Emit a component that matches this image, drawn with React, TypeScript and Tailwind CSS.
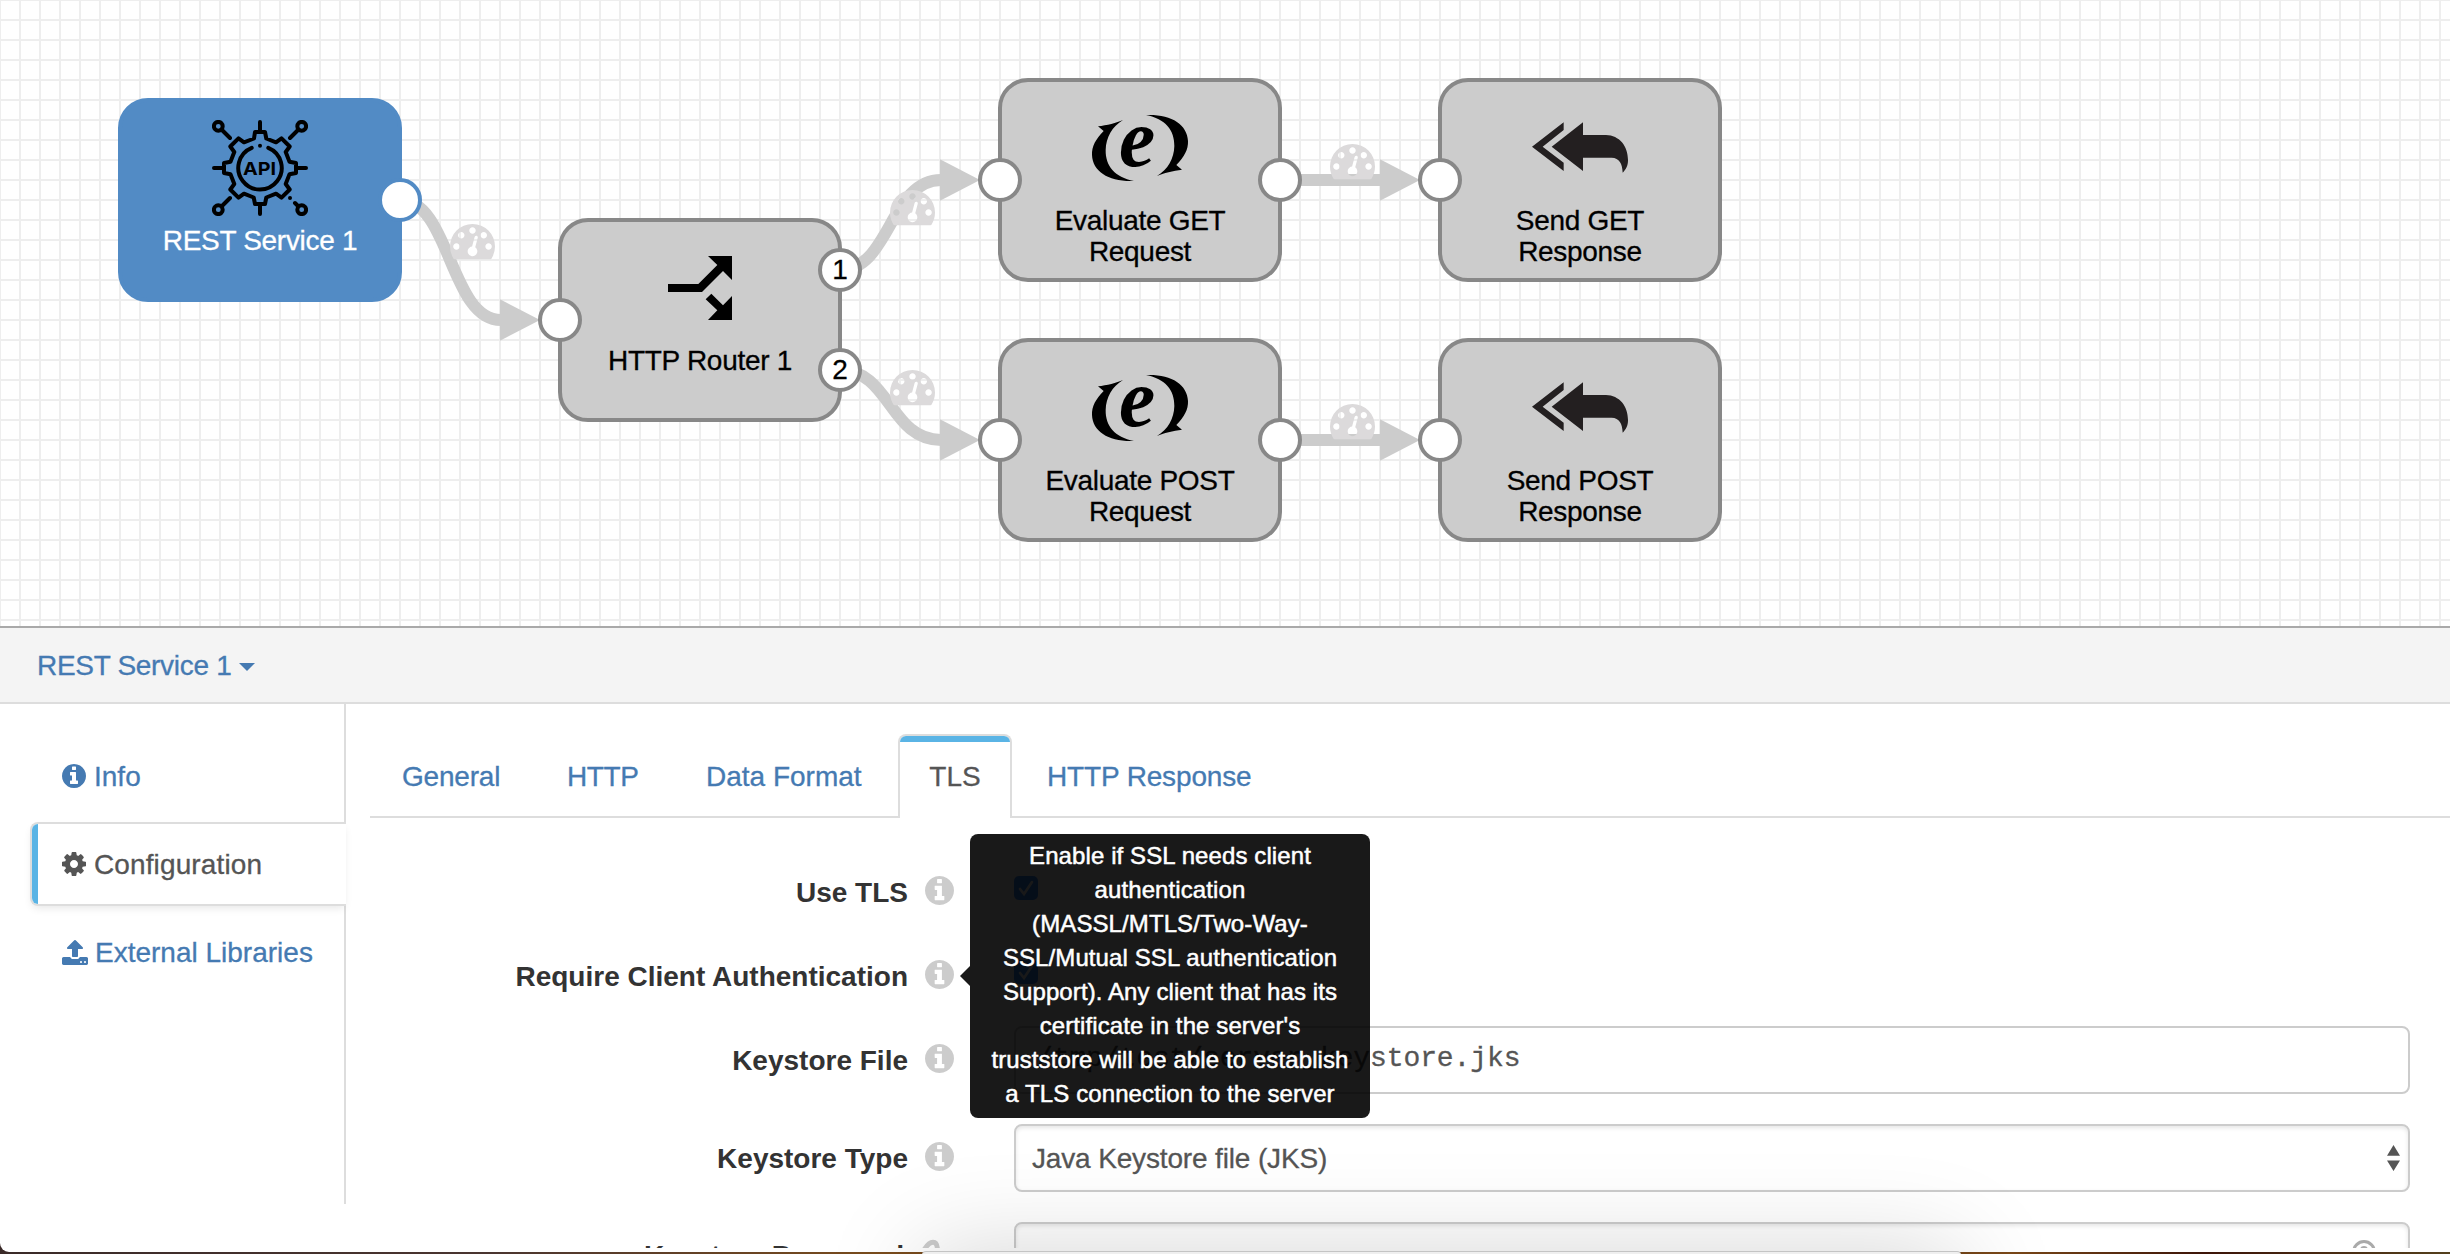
import React from "react";

const GAUGE =
  "M384 1152q0-53-37.5-90.5t-90.5-37.5-90.5 37.5-37.5 90.5 37.5 90.5 90.5 37.5 90.5-37.5 37.5-90.5zm192-448q0-53-37.5-90.5t-90.5-37.5-90.5 37.5-37.5 90.5 37.5 90.5 90.5 37.5 90.5-37.5 37.5-90.5zm428 481l101-382q6-26-7.5-48.5t-38.5-29.5-48 6.5-30 39.5l-101 382q-60 5-107 43.5t-63 98.5q-20 77 20 146t117 89 146-20 89-117q16-60-6-117t-72-91zm660-33q0-53-37.5-90.5t-90.5-37.5-90.5 37.5-37.5 90.5 37.5 90.5 90.5 37.5 90.5-37.5 37.5-90.5zm-640-640q0-53-37.5-90.5t-90.5-37.5-90.5 37.5-37.5 90.5 37.5 90.5 90.5 37.5 90.5-37.5 37.5-90.5zm448 192q0-53-37.5-90.5t-90.5-37.5-90.5 37.5-37.5 90.5 37.5 90.5 90.5 37.5 90.5-37.5 37.5-90.5zm320 448q0 261-141 483-19 29-54 29h-1402q-35 0-54-29-141-221-141-483 0-182 71-348t191-286 286-191 348-71 348 71 286 191 191 286 71 348z";
const INFO =
  "M1152 1376v-160q0-14-9-23t-23-9h-96v-512q0-14-9-23t-23-9h-320q-14 0-23 9t-9 23v160q0 14 9 23t23 9h96v320h-96q-14 0-23 9t-9 23v160q0 14 9 23t23 9h448q14 0 23-9t9-23zm-128-896v-160q0-14-9-23t-23-9h-192q-14 0-23 9t-9 23v160q0 14 9 23t23 9h192q14 0 23-9t9-23zm640 416q0 209-103 385.5t-279.5 279.5-385.5 103-385.5-103-279.5-279.5-103-385.5 103-385.5 279.5-279.5 385.5-103 385.5 103 279.5 279.5 103 385.5z";
const COG =
  "M1024 768q0-106-75-181t-181-75-181 75-75 181 75 181 181 75 181-75 75-181zm512-109v222q0 12-8 23t-20 13l-185 28q-19 54-39 91 35 50 107 138 10 12 10 25t-9 23q-27 37-99 108t-94 71q-12 0-26-9l-138-108q-44 23-91 38-16 136-29 186-7 28-36 28h-222q-14 0-24.5-8.5t-11.5-21.5l-28-184q-49-16-90-37l-141 107q-10 9-25 9-14 0-25-11-126-114-165-168-7-10-7-23 0-12 8-23 15-21 51-66.5t54-70.5q-27-50-41-99l-183-27q-13-2-21-12.5t-8-23.5v-222q0-12 8-23t19-13l186-28q14-46 39-92-40-57-107-138-10-12-10-24 0-10 9-23 26-36 98.5-107.5t94.5-71.5q13 0 26 10l138 107q44-23 91-38 16-136 29-186 7-28 36-28h222q14 0 24.5 8.5t11.5 21.5l28 184q49 16 90 37l142-107q9-9 24-9 13 0 25 10 129 119 165 170 7 8 7 22 0 12-8 23-15 21-51 66.5t-54 70.5q26 50 41 98l183 28q13 2 21 12.5t8 23.5z";
const UPLOAD =
  "M1344 1472q0-26-19-45t-45-19-45 19-19 45 19 45 45 19 45-19 19-45zm256 0q0-26-19-45t-45-19-45 19-19 45 19 45 45 19 45-19 19-45zm128-224v320q0 40-28 68t-68 28h-1472q-40 0-68-28t-28-68v-320q0-40 28-68t68-28h427q21 56 70.5 92t110.5 36h256q61 0 110.5-36t70.5-92h427q40 0 68 28t28 68zm-325-648q-17 40-59 40h-256v448q0 26-19 45t-45 19h-256q-26 0-45-19t-19-45v-448h-256q-42 0-59-40-17-39 14-69l448-448q18-19 45-19t45 19l448 448q31 30 14 69z";

function InfoIcon({ className }: { className: string }) {
  return (
    <svg viewBox="128 128 1536 1536" fill="currentColor" className={className}>
      <path d={INFO} />
    </svg>
  );
}

function ApiIcon() {
  return (
    <svg viewBox="0 0 96 96" className="mt-[18px] h-24 w-24 shrink-0" fill="none" stroke="#000" strokeWidth="4" strokeLinecap="round" strokeLinejoin="round">
      <path d="M42 18.5L43 12H53L54.3 18.5L64 22.3L69.5 18.3L77.7 26.5L73.7 32L77.5 41.7L84 43V53L77.5 54.3L73.7 64L77.7 69.5L69.5 77.7L64 73.7L54.3 77.5L53 84H43L41.7 77.5L32 73.7L26.5 77.7L18.3 69.5L22.3 64L18.5 54.3L12 53V43L18.5 41.7L22.3 32L18.3 26.5L26.5 18.3L32 22.3Z" />
      <path d="M48 2V11M48 85V94M2 48H11M85 48H94M10 10L18 18M86 10L78 18M10 86L18 78M86 86L83 83M78 78H78.01M48 25.7H48.01" />
      <circle cx="6.3" cy="6.3" r="4.4" />
      <circle cx="89.7" cy="6.3" r="4.4" />
      <circle cx="6.3" cy="89.7" r="4.4" />
      <circle cx="89.7" cy="89.7" r="4.4" />
      <path d="M39.7 27.8A21.7 21.7 0 1 0 56.3 27.8" />
      <text x="31" y="54.6" textLength="33" lengthAdjust="spacingAndGlyphs" fontFamily="Inter, sans-serif" fontSize="18" fontWeight="700" fill="#000" stroke="none">
        API
      </text>
    </svg>
  );
}

function RouterIcon() {
  return (
    <svg viewBox="384 468 192 192" className="mt-[34px] mb-[16px] h-16 w-16 shrink-0">
      <path d="M384 552H475L532 495L504 468H576V540L549 513L486 576H384Z" />
      <path d="M514 581L549 616L576 588V660H504L532 631L497 598Z" />
    </svg>
  );
}

const CRESCENT =
  "M129 60C110 69 80 76 54 79L71 93C47 117 35 140 36 165C38 216 88 246 162 243C104 232 76 197 77 150C78 112 96 80 129 60Z";

function EvaluateIcon() {
  return (
    <svg viewBox="0 0 360 288" className="mt-[18px] h-24 w-[120px] shrink-0 overflow-visible">
      <path d={CRESCENT} />
      <path d={CRESCENT} transform="rotate(180 180 144)" />
      <text x="117" y="198" fontFamily="Liberation Serif, serif" fontSize="245" fontWeight="700" fontStyle="italic">
        e
      </text>
    </svg>
  );
}

function SendIcon() {
  return (
    <svg viewBox="0 0 360 288" className="mt-[18px] h-24 w-[120px] shrink-0" fill="#231f20">
      <path d="M36 140L131 67V90L68 140L131 188V213Z" />
      <path d="M95 140L189 67V105H258C298 106 324 138 324 180C324 198 318 208 308 218C307 190 298 174 275 173H189V213Z" />
    </svg>
  );
}

type NodeProps = {
  place: string;
  icon: React.ReactNode;
  lines: string[];
  active?: boolean;
};

function FlowNode({ place, icon, lines, active }: NodeProps) {
  const tone = active ? "border-[#528bc5] bg-[#528bc5] text-white" : "border-[#888] bg-[#ccc] text-black";
  return (
    <div className={`absolute flex h-[204px] w-[284px] flex-col items-center rounded-[30px] border-4 ${tone} ${place}`}>
      {icon}
      <div className="mt-[9px] text-center text-[28px] leading-[31px] tracking-[-0.3px] whitespace-nowrap [-webkit-text-stroke:0.3px_currentColor]">
        {lines.map((l) => (
          <div key={l}>{l}</div>
        ))}
      </div>
    </div>
  );
}

function Port({ place, label, active }: { place: string; label?: string; active?: boolean }) {
  return (
    <div
      className={`absolute flex h-11 w-11 items-center justify-center rounded-full border-4 bg-white text-[28px] leading-none text-black [-webkit-text-stroke:0.3px_currentColor] ${
        active ? "border-[#528bc5]" : "border-[#888]"
      } ${place}`}
    >
      {label}
    </div>
  );
}

function Wires() {
  const wires = [
    "M400 200C450 200 450 320 501 320",
    "M840 270C890 270 890 180 941 180",
    "M840 370C890 370 890 440 941 440",
    "M1280 180H1381",
    "M1280 440H1381",
  ];
  const heads = [
    [500, 320],
    [940, 180],
    [940, 440],
    [1380, 180],
    [1380, 440],
  ];
  const gauges = [
    [450, 224],
    [890, 190],
    [890, 370],
    [1330, 144],
    [1330, 404],
  ];
  return (
    <svg className="absolute inset-0 h-full w-full" viewBox="0 0 2450 626">
      {wires.map((d) => (
        <path key={d} d={d} fill="none" stroke="#ccc" strokeWidth="12" />
      ))}
      {heads.map(([x, y]) => (
        <path key={`${x}-${y}`} d={`M${x} ${y - 20.7}L${x + 40} ${y}L${x} ${y + 20.7}Z`} fill="#ccc" />
      ))}
      {gauges.map(([x, y]) => (
        <svg key={`${x}-${y}`} x={x} y={y} width="45" height="35.4" viewBox="0 256 1792 1408">
          <path d={GAUGE} fill="#dcdadb" />
        </svg>
      ))}
    </svg>
  );
}

function Canvas() {
  return (
    <div className="relative h-[626px] shrink-0 overflow-hidden bg-white bg-[linear-gradient(to_right,#eee_2px,transparent_2px),linear-gradient(to_bottom,#eee_2px,transparent_2px)] bg-[length:20px_20px] bg-[position:-1px_-1px]">
      <Wires />
      <FlowNode place="left-[118px] top-[98px]" icon={<ApiIcon />} lines={["REST Service 1"]} active />
      <FlowNode place="left-[558px] top-[218px]" icon={<RouterIcon />} lines={["HTTP Router 1"]} />
      <FlowNode place="left-[998px] top-[78px]" icon={<EvaluateIcon />} lines={["Evaluate GET", "Request"]} />
      <FlowNode place="left-[1438px] top-[78px]" icon={<SendIcon />} lines={["Send GET", "Response"]} />
      <FlowNode place="left-[998px] top-[338px]" icon={<EvaluateIcon />} lines={["Evaluate POST", "Request"]} />
      <FlowNode place="left-[1438px] top-[338px]" icon={<SendIcon />} lines={["Send POST", "Response"]} />
      <Port place="left-[378px] top-[178px]" active />
      <Port place="left-[538px] top-[298px]" />
      <Port place="left-[818px] top-[248px]" label="1" />
      <Port place="left-[818px] top-[348px]" label="2" />
      <Port place="left-[978px] top-[158px]" />
      <Port place="left-[1258px] top-[158px]" />
      <Port place="left-[1418px] top-[158px]" />
      <Port place="left-[978px] top-[418px]" />
      <Port place="left-[1258px] top-[418px]" />
      <Port place="left-[1418px] top-[418px]" />
    </div>
  );
}

function SideNav() {
  return (
    <aside className="flex h-[500px] w-[346px] shrink-0 flex-col pl-[30px] text-[28px] leading-[84px] text-[#457ab2] [-webkit-text-stroke:0.3px_currentColor]">
      <div className="h-[118px] border-r-2 border-[#ddd] pt-[30px]">
        <div className="flex h-[84px] items-center pl-8">
          <InfoIcon className="h-6 w-6" />
          <span className="ml-2 pt-px">Info</span>
        </div>
      </div>
      <div className="relative flex h-[84px] items-center overflow-visible rounded-l-[8px] border-y-2 border-l-2 border-[#ddd] bg-white text-[#555] shadow-[0_4px_8px_-2px_rgba(0,0,0,0.1)]">
        <div className="h-full w-[6px] rounded-l-[6px] bg-[#5ab4e5]" />
        <svg viewBox="0 0 1536 1536" className="ml-6 h-6 w-6" fill="currentColor">
          <path d={COG} />
        </svg>
        <span className="ml-[8px] pt-px tracking-[0.12px]">Configuration</span>
      </div>
      <div className="flex-1 border-r-2 border-[#ddd] pt-1">
        <div className="flex h-[84px] items-center pl-8">
          <svg viewBox="64 64 1664 1600" className="h-[25px] w-[26px]" fill="currentColor">
            <path d={UPLOAD} />
          </svg>
          <span className="ml-[7px] pt-px whitespace-nowrap">External Libraries</span>
        </div>
      </div>
    </aside>
  );
}

function Tabs() {
  const idle = "border-b-2 border-[#ddd] pt-px pl-8";
  return (
    <div className="flex h-[84px] text-[28px] leading-[84px] whitespace-nowrap text-[#457ab2] [-webkit-text-stroke:0.3px_currentColor]">
      <div className={`w-[165px] tracking-[-0.2px] ${idle}`}>General</div>
      <div className={`w-[139px] tracking-[-0.4px] ${idle}`}>HTTP</div>
      <div className={`w-[224px] ${idle}`}>Data Format</div>
      <div className="w-[114px] rounded-t-[8px] border-x-2 border-t-2 border-[#ddd] text-center text-[#555]">
        <div className="h-[6px] rounded-t-[6px] bg-[#5ab4e5]" />
        <div className="-mt-[7px]">TLS</div>
      </div>
      <div className="flex-1 border-b-2 border-[#ddd] pt-px pl-[35px] tracking-[-0.15px]">HTTP Response</div>
    </div>
  );
}

function Row({ label, gap, children, tip }: { label: string; gap: string; children: React.ReactNode; tip?: React.ReactNode }) {
  return (
    <div className={`relative flex h-[68px] shrink-0 ${gap}`}>
      <div className="w-[538px] pt-px text-right text-[28px] leading-[68px] font-bold whitespace-nowrap text-[#333]">{label}</div>
      <InfoIcon className="mt-[17.5px] ml-[17px] h-[29px] w-[29px] text-[#ccc]" />
      <div className="ml-[60px] flex w-[1396px]">{children}</div>
      {tip}
    </div>
  );
}

function Check() {
  return (
    <div className="mt-[18px] h-6 w-6 rounded-[5px] bg-[#3b8ffc]">
      <svg viewBox="0 0 24 24" fill="none" stroke="#fff" strokeWidth="2.6" strokeLinecap="round">
        <path d="M6 13L10 18L18 6" />
      </svg>
    </div>
  );
}

function Tooltip() {
  const lines = [
    "Enable if SSL needs client",
    "authentication",
    "(MASSL/MTLS/Two-Way-",
    "SSL/Mutual SSL authentication",
    "Support). Any client that has its",
    "certificate in the server's",
    "truststore will be able to establish",
    "a TLS connection to the server",
  ];
  return (
    <div className="absolute top-[-108px] left-[590px] z-10 flex items-center">
      <div className="h-0 w-0 border-y-[10px] border-r-[10px] border-y-transparent border-r-black opacity-90" />
      <div className="h-[284px] w-[400px] rounded-[8px] bg-black/90 pt-[5px] text-center text-[24px] leading-[34px] tracking-[0.1px] whitespace-nowrap text-white [-webkit-text-stroke:0.5px_#fff]">
        {lines.map((l) => (
          <div key={l}>{l}</div>
        ))}
      </div>
    </div>
  );
}

function Form() {
  return (
    <div className="flex flex-col pt-10">
      <Row label="Use TLS" gap="mb-4">
        <Check />
      </Row>
      <Row label="Require Client Authentication" gap="mb-4" tip={<Tooltip />}>
        <Check />
      </Row>
      <Row label="Keystore File" gap="mb-[30px]">
        <div className="h-[68px] w-full rounded-[8px] border-2 border-[#ccc] bg-white pl-[20px] font-['Liberation_Mono',monospace] text-[28px] leading-[62px] tracking-[-0.1px] text-[#555] [-webkit-text-stroke:0.3px_currentColor]">
          /tmp/test/server_keystore.jks
        </div>
      </Row>
      <Row label="Keystore Type" gap="mb-[30px]">
        <div className="flex h-[68px] w-full items-center justify-between rounded-[8px] border-2 border-[#ccc] bg-white pr-2 pl-4 text-[28px] leading-[64px] text-[#555] shadow-[inset_0_2px_4px_rgba(0,0,0,0.1)]">
          <span className="pt-px tracking-[-0.15px] [-webkit-text-stroke:0.3px_currentColor]">Java Keystore file (JKS)</span>
          <svg viewBox="0 0 13 26" className="h-[26px] w-[13px]" fill="#555">
            <path d="M0 10.7L6.5 0L13 10.7ZM0 15.5H13L6.5 26Z" />
          </svg>
        </div>
      </Row>
      <div className="flex h-[68px] shrink-0">
        <div className="w-[534px] text-right text-[28px] leading-[68px] font-bold whitespace-nowrap text-[#333]">Keystore Password</div>
        <svg viewBox="0 0 18 28" className="mt-[17px] ml-[18px] h-7 w-[18px]" fill="none" stroke="#ccc" strokeWidth="5">
          <path d="M2 11C5 6 8 3.2 11 3.2C14 3.2 15.5 6 15.5 12V28" />
        </svg>
        <div className="ml-[74px] flex h-[68px] w-[1396px] justify-end rounded-[8px] border-2 border-[#ccc] bg-white pr-8 shadow-[inset_0_2px_4px_rgba(0,0,0,0.1)]">
          <svg viewBox="0 0 24 24" className="mt-4 h-6 w-6" fill="none" stroke="#aaa" strokeWidth="3">
            <circle cx="12" cy="12" r="10.4" />
            <circle cx="12" cy="10" r="2.5" />
          </svg>
        </div>
      </div>
    </div>
  );
}

export default function App() {
  return (
    <div className="relative flex h-[1254px] w-[2450px] flex-col overflow-hidden bg-[linear-gradient(to_right,#3a2a28,#4a3530_20%,#7a4c1c_36%,#5a3512_70%,#7a4818_82%,#3c1408_90%,#54401c)] font-['Liberation_Sans',Arial,sans-serif]">
      <div className="flex h-[1252px] shrink-0 flex-col overflow-hidden rounded-bl-[9px] bg-white">
        <Canvas />
        <header className="flex h-[78px] shrink-0 items-center border-t-2 border-b-2 border-t-[#a9a9a9] border-b-[#ddd] bg-[#f4f4f4] pt-[2px] pl-[37px] text-[28px] leading-[40px] text-[#457ab2]">
          <span className="tracking-[-0.3px] [-webkit-text-stroke:0.3px_currentColor]">REST Service 1</span>
          <span className="mt-[2px] ml-[8px] h-0 w-0 border-x-[8px] border-t-[8px] border-x-transparent border-t-[#457ab2]" />
        </header>
        <div className="flex h-[544px] shrink-0 overflow-hidden">
          <SideNav />
          <main className="ml-6 min-w-0 flex-1 pt-[30px]">
            <Tabs />
            <Form />
          </main>
        </div>
      </div>
      <div className="pointer-events-none absolute inset-x-0 top-[1000px] h-[254px] overflow-hidden">
        <div className="absolute top-[251px] left-[922px] h-[200px] w-[1039px] rounded-t-[4px] border-t border-[#c4c4c4] bg-[#efefef] shadow-[0_0_100px_rgba(0,0,0,0.17)]" />
      </div>
    </div>
  );
}
